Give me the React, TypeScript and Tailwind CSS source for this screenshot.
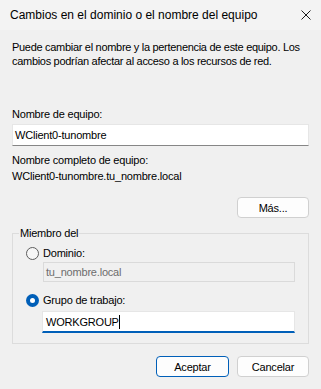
import * as React from 'react';

interface IRadioProps {
    checked: boolean;
    label: string;
}

const Radio: React.FunctionComponent<IRadioProps> = ({ checked, label }) => {
    return (
        <div className="flex items-center h-[14px] leading-[14px]">
            {checked ? (
                <span className="w-[13px] h-[13px] rounded-full bg-[#005fb8] flex items-center justify-center">
                    <span className="w-[5px] h-[5px] rounded-full bg-white" />
                </span>
            ) : (
                <span className="w-[13px] h-[13px] rounded-full border border-[#5d5d5d] bg-[#f6f6f6]" />
            )}
            <span className="ml-[4px]">{label}</span>
        </div>
    );
};

const App: React.FunctionComponent = () => {
    return (
        <div
            className="w-[321px] h-[389px] bg-[#f0f0f0] text-[11px] leading-[14px] tracking-[-0.2px] text-black overflow-hidden"
            style={{ fontFamily: '"Liberation Sans", Arial, sans-serif' }}
        >
            {/* title bar */}
            <div className="h-[30px] bg-[#f3f3f3] flex items-center justify-between pl-[10px] pr-[10px] tracking-normal">
                <span className="text-[12px]">Cambios en el dominio o el nombre del equipo</span>
                <svg width="10" height="10" viewBox="0 0 10 10">
                    <path d="M0.5 0.5 L9.5 9.5 M9.5 0.5 L0.5 9.5" stroke="#1a1a1a" strokeWidth="1" />
                </svg>
            </div>

            <div className="flex flex-col px-[12px]">
                <p className="mt-[10px] whitespace-nowrap tracking-[-0.3px]">
                    Puede cambiar el nombre y la pertenencia de este equipo. Los
                    <br />
                    cambios podrían afectar al acceso a los recursos de red.
                </p>

                <div className="mt-[39px]">Nombre de equipo:</div>
                <div className="mt-[3px] h-[22px] bg-white border border-[#e6e6e6] border-b-[#868686] flex items-center pl-[2px]">
                    WClient0-tunombre
                </div>

                <div className="mt-[7px]">Nombre completo de equipo:</div>
                <div className="mt-[2px]">WClient0-tunombre.tu_nombre.local</div>

                <button className="self-end mt-[14px] w-[72px] h-[21px] rounded-[4px] border border-[#d0d0d0] bg-[#fdfdfd] text-[11px]">
                    Más...
                </button>

                <fieldset className="mt-[8px] border border-[#dcdcdc] p-0 pb-[10px]">
                    <legend className="ml-[6px] px-[1px] leading-[14px]">Miembro del</legend>
                    <div className="px-[13px]">
                        <div className="mt-[6px]">
                            <Radio checked={false} label="Dominio:" />
                        </div>
                        <div className="mt-[2px] ml-[17px] h-[20px] border border-[#dadada] bg-[#f0f0f0] text-[#6d6d6d] flex items-center pl-[2px]">
                            tu_nombre.local
                        </div>
                        <div className="mt-[11px]">
                            <Radio checked={true} label="Grupo de trabajo:" />
                        </div>
                        <div className="mt-[4px] ml-[16px] h-[22px] bg-white border border-[#e6e6e6] border-b-2 border-b-[#005fb8] flex items-center pl-[3px]">
                            <span>WORKGROUP</span>
                            <span className="w-px h-[14px] bg-black" />
                        </div>
                    </div>
                </fieldset>

                <div className="mt-[12px] flex justify-end gap-[8px]">
                    <button className="w-[73px] h-[21px] rounded-[4px] border border-[#005fb8] bg-[#fdfdfd] text-[11px]">
                        Aceptar
                    </button>
                    <button className="w-[72px] h-[21px] rounded-[4px] border border-[#d0d0d0] bg-[#fdfdfd] text-[11px]">
                        Cancelar
                    </button>
                </div>
            </div>
        </div>
    );
};

export default App;
